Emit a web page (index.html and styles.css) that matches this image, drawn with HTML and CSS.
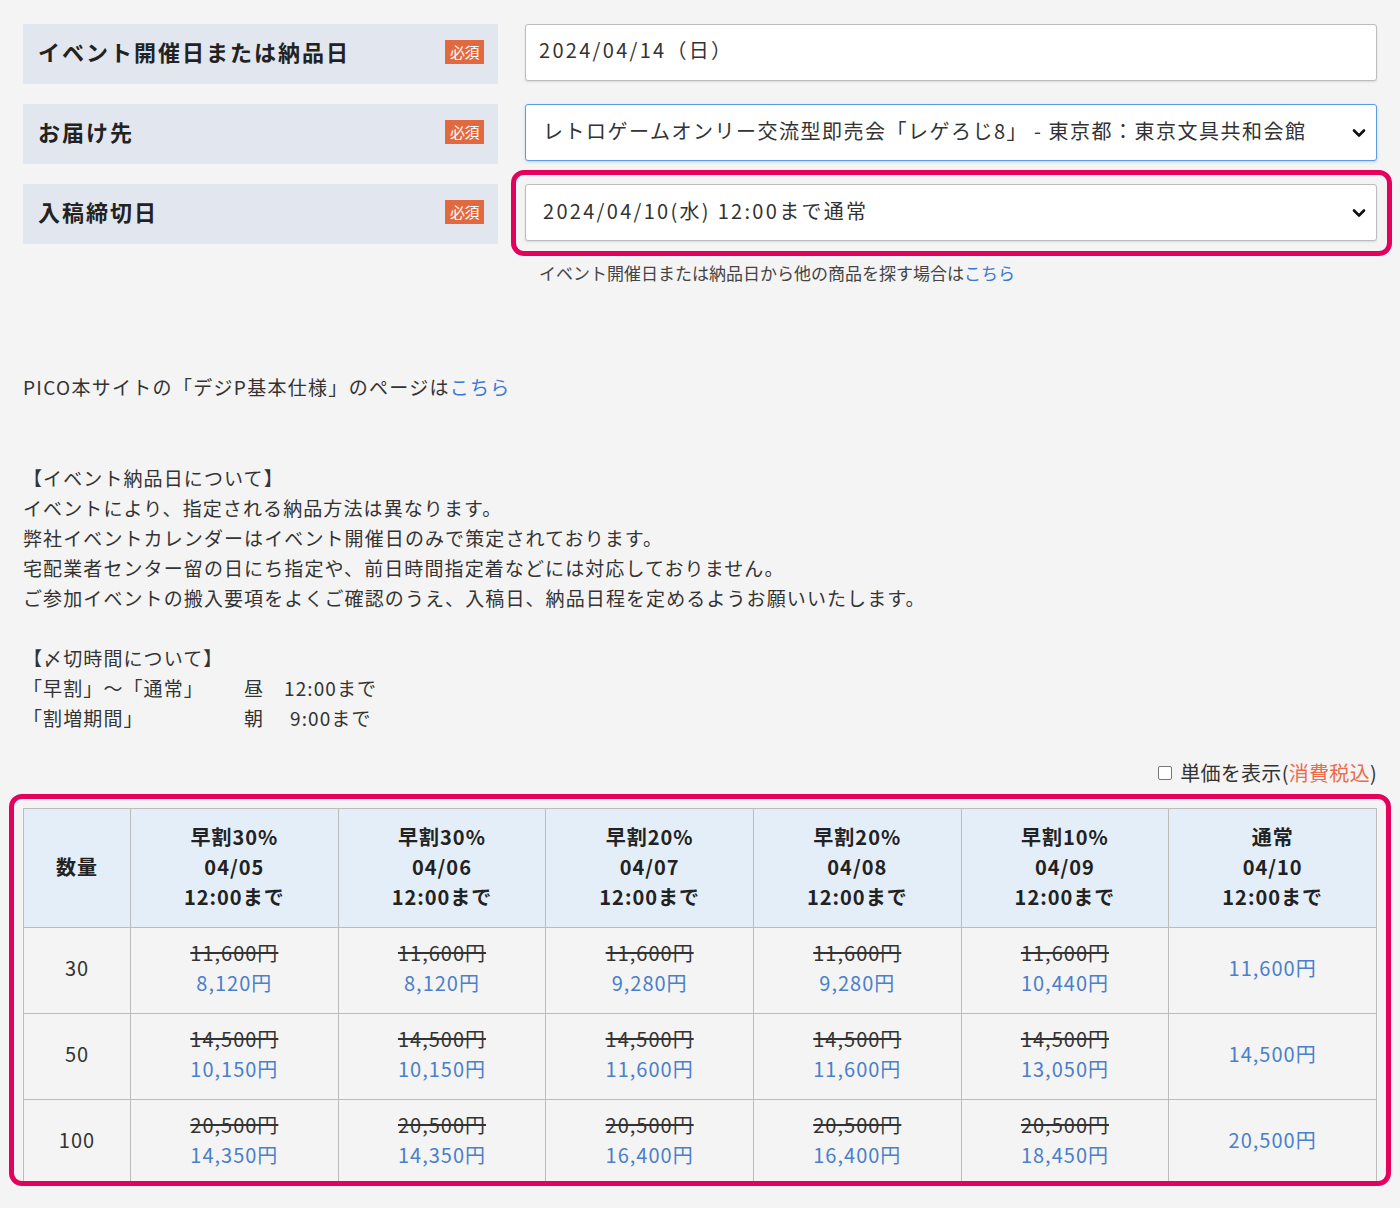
FILE: index.html
```html
<!DOCTYPE html>
<html lang="ja">
<head>
<meta charset="utf-8">
<title>入稿締切日</title>
<link rel="stylesheet" href="styles.css">
</head>
<body>
<div class="page">
  <div class="form">
    <div class="form-row">
      <div class="label"><span class="label-text">イベント開催日または納品日</span><span class="badge">必須</span></div>
      <div class="field">
        <div class="input">2024/04/14（日）</div>
      </div>
    </div>
    <div class="form-row">
      <div class="label"><span class="label-text">お届け先</span><span class="badge">必須</span></div>
      <div class="field">
        <div class="select select-focus"><span>レトロゲームオンリー交流型即売会「レゲろじ8」 - 東京都：東京文具共和会館</span>
          <svg class="chev" width="14" height="10" viewBox="0 0 14 10"><path d="M2 2.5 L7 7.5 L12 2.5" fill="none" stroke="#111" stroke-width="2.6" stroke-linecap="round" stroke-linejoin="round"/></svg>
        </div>
      </div>
    </div>
    <div class="form-row">
      <div class="label"><span class="label-text">入稿締切日</span><span class="badge">必須</span></div>
      <div class="field">
        <div class="select"><span>2024/04/10(水) 12:00まで通常</span>
          <svg class="chev" width="14" height="10" viewBox="0 0 14 10"><path d="M2 2.5 L7 7.5 L12 2.5" fill="none" stroke="#111" stroke-width="2.6" stroke-linecap="round" stroke-linejoin="round"/></svg>
        </div>
        <div class="mark mark-select"></div>
        <p class="hint">イベント開催日または納品日から他の商品を探す場合は<a href="#" class="link">こちら</a></p>
      </div>
    </div>
  </div>

  <p class="spec">PICO本サイトの「デジP基本仕様」のページは<a href="#" class="link">こちら</a></p>

  <div class="notes">
    <p>【イベント納品日について】<br>イベントにより、指定される納品方法は異なります。<br>弊社イベントカレンダーはイベント開催日のみで策定されております。<br>宅配業者センター留の日にち指定や、前日時間指定着などには対応しておりません。<br>ご参加イベントの搬入要項をよくご確認のうえ、入稿日、納品日程を定めるようお願いいたします。</p>
    <p class="deadline-title">【〆切時間について】</p>
    <div class="deadline"><span class="d-name">「早割」～「通常」</span><span class="d-time">昼</span><span class="d-hour">12:00まで</span></div>
    <div class="deadline"><span class="d-name">「割増期間」</span><span class="d-time">朝</span><span class="d-hour d-hour-pad">9:00まで</span></div>
  </div>

  <div class="unit-toggle">
    <label class="check"><span class="box"></span>単価を表示(<span class="tax">消費税込</span>)</label>
  </div>

  <div class="table-wrap">
    <table class="price">
      <colgroup>
        <col class="c-qty"><col class="c-day"><col class="c-day"><col class="c-day"><col class="c-day"><col class="c-day"><col class="c-day">
      </colgroup>
      <thead>
        <tr>
          <th>数量</th>
          <th>早割30%<br>04/05<br>12:00まで</th>
          <th>早割30%<br>04/06<br>12:00まで</th>
          <th>早割20%<br>04/07<br>12:00まで</th>
          <th>早割20%<br>04/08<br>12:00まで</th>
          <th>早割10%<br>04/09<br>12:00まで</th>
          <th>通常<br>04/10<br>12:00まで</th>
        </tr>
      </thead>
      <tbody>
        <tr>
          <td>30</td>
          <td><s>11,600円</s><br><span class="p">8,120円</span></td>
          <td><s>11,600円</s><br><span class="p">8,120円</span></td>
          <td><s>11,600円</s><br><span class="p">9,280円</span></td>
          <td><s>11,600円</s><br><span class="p">9,280円</span></td>
          <td><s>11,600円</s><br><span class="p">10,440円</span></td>
          <td><span class="p">11,600円</span></td>
        </tr>
        <tr>
          <td>50</td>
          <td><s>14,500円</s><br><span class="p">10,150円</span></td>
          <td><s>14,500円</s><br><span class="p">10,150円</span></td>
          <td><s>14,500円</s><br><span class="p">11,600円</span></td>
          <td><s>14,500円</s><br><span class="p">11,600円</span></td>
          <td><s>14,500円</s><br><span class="p">13,050円</span></td>
          <td><span class="p">14,500円</span></td>
        </tr>
        <tr>
          <td>100</td>
          <td><s>20,500円</s><br><span class="p">14,350円</span></td>
          <td><s>20,500円</s><br><span class="p">14,350円</span></td>
          <td><s>20,500円</s><br><span class="p">16,400円</span></td>
          <td><s>20,500円</s><br><span class="p">16,400円</span></td>
          <td><s>20,500円</s><br><span class="p">18,450円</span></td>
          <td><span class="p">20,500円</span></td>
        </tr>
      </tbody>
    </table>
    <div class="mark mark-table"></div>
  </div>
</div>
</body>
</html>
```

FILE: styles.css
```css
* { box-sizing: border-box; }

html, body {
  margin: 0;
  padding: 0;
  background: #f4f4f4;
}

body {
  font-family: "Noto Sans CJK JP", "Noto Sans", sans-serif;
  color: #333;
  font-size: 20px;
  line-height: 30px;
}

.page {
  padding: 24px 23px 0 23px;
  width: 1400px;
}

p { margin: 0; }

.link { color: #3a78d4; text-decoration: none; }

/* form */
.form {
  display: flex;
  flex-direction: column;
  gap: 20px;
}

.form-row {
  display: grid;
  grid-template-columns: 475px 852px;
  column-gap: 27px;
  align-items: start;
}

.label {
  height: 60px;
  background: #e2e6ee;
  display: flex;
  align-items: center;
  justify-content: space-between;
  padding: 0 14px 6px 15px;
}

.label-text {
  font-size: 22px;
  font-weight: 700;
  color: #222;
  letter-spacing: 2px;
}

.badge {
  background: #e2693f;
  color: #fff;
  font-size: 15px;
  line-height: 24px;
  height: 24px;
  padding: 0 5px;
  letter-spacing: -0.5px;
  margin-top: 2px;
}

.field { position: relative; }

.input, .select {
  height: 57px;
  background: #fff;
  border: 1px solid #bdbdbd;
  border-radius: 3px;
  box-shadow: 0 1px 2px rgba(0,0,0,0.12);
  display: flex;
  align-items: center;
  font-size: 20px;
  color: #333;
  letter-spacing: 2.3px;
}

.input { padding: 0 13px 5px 13px; }

.select {
  padding: 0 10px 3px 17px;
  justify-content: space-between;
}

.select-focus {
  border-color: #5a9be8;
  box-shadow: 0 1px 3px rgba(90,155,232,0.35);
  letter-spacing: 1.5px;
}

.chev { flex: none; margin-top: 3px; }

.hint {
  margin-top: 20px;
  padding-left: 14px;
  font-size: 17px;
  line-height: 24px;
  color: #444;
  letter-spacing: 0;
}

/* annotation marks */
.mark {
  position: absolute;
  border: 5px solid #e4005d;
  border-radius: 13px;
  pointer-events: none;
}

.mark-select {
  left: -14px;
  top: -14px;
  width: 881px;
  height: 86px;
}

.mark-table {
  left: -14px;
  top: -14px;
  right: -14px;
  bottom: 0;
}

/* text */
.spec {
  margin-top: 87px;
  font-size: 19px;
  line-height: 30px;
  color: #333;
  letter-spacing: 1.3px;
}

.notes {
  margin-top: 61px;
  font-size: 19px;
  line-height: 30px;
  color: #333;
  letter-spacing: 1.1px;
}

.deadline-title { margin-top: 30px; }

.deadline { display: flex; }
.d-name { width: 221px; }
.d-time { width: 40px; }
.d-hour-pad { padding-left: 6px; }

.unit-toggle {
  display: flex;
  justify-content: flex-end;
  margin-top: 25px;
  font-size: 20px;
  line-height: 30px;
}

.check {
  display: flex;
  align-items: center;
  color: #333;
  letter-spacing: 0.3px;
}

.box {
  width: 14px;
  height: 14px;
  border: 1px solid #777;
  border-radius: 2px;
  background: #fff;
  margin-right: 8px;
}

.tax { color: #ee6a4c; }

/* table */
.table-wrap {
  position: relative;
  margin-top: 20px;
}

.price {
  width: 1354px;
  border-collapse: collapse;
  table-layout: fixed;
}

.c-qty { width: 107px; }

.price th, .price td {
  border: 1.5px solid #bcbcbc;
  text-align: center;
  vertical-align: middle;
  font-size: 20px;
  line-height: 30px;
  letter-spacing: 1px;
}

.price th {
  background: #e4eef9;
  color: #222;
  font-weight: 700;
  height: 119px;
  padding-bottom: 4px;
}

.price td {
  height: 86px;
  color: #333;
  padding-bottom: 6px;
}

.price s {
  color: #333;
  text-decoration-thickness: 1.5px;
}

.price .p { color: #4a7fcb; }
```
